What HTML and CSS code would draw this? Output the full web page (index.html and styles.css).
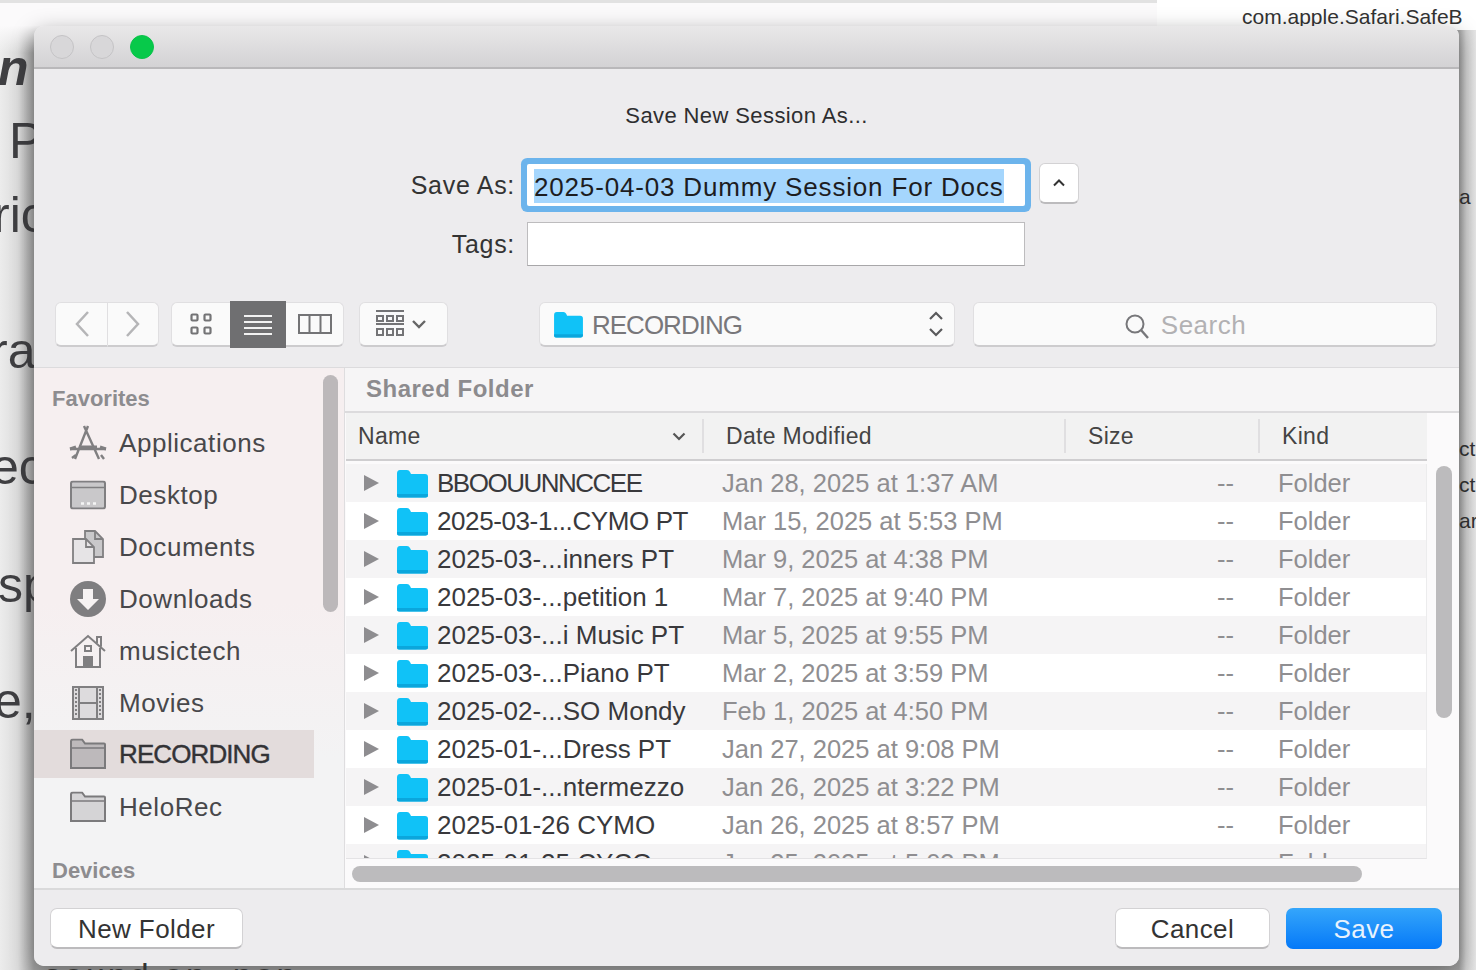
FILE: index.html
```html
<!DOCTYPE html>
<html lang="en">
<head>
  <meta charset="UTF-8">
  <title>Save New Session As</title>
  <link rel="stylesheet" href="styles.css">
</head>
<body>
<svg class="defs" width="0" height="0">
  <symbol id="blue-folder" viewBox="0 0 33 29">
    <path d="M1 4.500Q1 1 4 1h7q2 0 3 2l1 2h14q3 0 3 3v18q0 2.500-2.500 2.500h-27Q1 28.500 1 26z" fill="#10c2f7"/>
    <path d="M1 26q0 2.500 2.500 2.500h26q2.500 0 2.500-2.500v-1H1z" fill="#0ba6dc"/>
  </symbol>
  <symbol id="gray-folder" viewBox="0 0 36 31">
    <path d="M1 29.500V3q0-2 2-2h9l3 4h19q1 0 1 1v23.500z" fill="currentColor" stroke="#7b7a7c" stroke-width="2"/>
    <path d="M1 9.500h34" stroke="#7b7a7c" stroke-width="1.500"/>
  </symbol>
  <symbol id="twisty" viewBox="0 0 16 16"><path d="M1 0l15 8-15 8z" fill="#8e8d90"/></symbol>
</svg>

<div class="backdrop">
  <div class="top-sheet"></div>
  <div class="top-list">com.apple.Safari.SafeB</div>
  <span class="bg-text bg-n">n</span>
  <span class="bg-text bg-p">P</span>
  <span class="bg-text bg-ric">ric</span>
  <span class="bg-text bg-ra">ra</span>
  <span class="bg-text bg-ec">ec</span>
  <span class="bg-text bg-sp">sp</span>
  <span class="bg-text bg-e">e,</span>
  <span class="bg-small bg-a1">a</span>
  <span class="bg-small bg-c1">cti</span>
  <span class="bg-small bg-c2">cti</span>
  <span class="bg-small bg-c3">ar</span>
  <span class="bg-bottom">sound on, non</span>
</div>

<div class="window">
  <div class="titlebar">
    <span class="light"></span>
    <span class="light"></span>
    <span class="light green"></span>
  </div>

  <div class="form">
    <div class="form-title">Save New Session As...</div>
    <div class="form-row save-row">
      <label>Save As:</label>
      <div class="field focused"><span class="selection">2025-04-03 Dummy Session For Docs</span></div>
      <button class="collapse">
        <svg width="14" height="9" viewBox="0 0 14 9"><path d="M2 7.500l5-5 5 5" fill="none" stroke="#333" stroke-width="2"/></svg>
      </button>
    </div>
    <div class="form-row tags-row">
      <label>Tags:</label>
      <div class="field tags"></div>
    </div>
  </div>

  <div class="toolbar">
    <div class="group nav">
      <button class="tool back">
        <svg width="16" height="28" viewBox="0 0 16 28"><path d="M14 2L3 14l11 12" fill="none" stroke="#b5b5b7" stroke-width="2.500"/></svg>
      </button>
      <button class="tool forward">
        <svg width="16" height="28" viewBox="0 0 16 28"><path d="M2 2l11 12L2 26" fill="none" stroke="#b5b5b7" stroke-width="2.500"/></svg>
      </button>
    </div>
    <div class="group views">
      <button class="tool view">
        <svg width="22" height="22" viewBox="0 0 22 22" fill="none" stroke="#747476" stroke-width="2.200"><rect x="1.500" y="1.500" width="6" height="6" rx="1"/><rect x="14.500" y="1.500" width="6" height="6" rx="1"/><rect x="1.500" y="14.500" width="6" height="6" rx="1"/><rect x="14.500" y="14.500" width="6" height="6" rx="1"/></svg>
      </button>
      <button class="tool view active">
        <svg width="30" height="22" viewBox="0 0 30 22" stroke="#f2f2f2" stroke-width="2"><path d="M1 2h28M1 8h28M1 14h28M1 20h28"/></svg>
      </button>
      <button class="tool view">
        <svg width="34" height="22" viewBox="0 0 34 22" fill="none" stroke="#747476" stroke-width="2"><rect x="1" y="2" width="32" height="18"/><path d="M11.500 2v18M22.500 2v18"/></svg>
      </button>
    </div>
    <button class="tool arrange">
      <svg width="30" height="28" viewBox="0 0 30 28" fill="none" stroke="#747476" stroke-width="2"><path d="M1 1h28M1 14h28"/><rect x="2" y="6" width="6" height="5"/><rect x="12" y="6" width="6" height="5"/><rect x="22" y="6" width="6" height="5"/><rect x="2" y="19" width="6" height="6"/><rect x="12" y="19" width="6" height="6"/><rect x="22" y="19" width="6" height="6"/></svg>
      <svg width="16" height="10" viewBox="0 0 16 10"><path d="M2 2l6 6 6-6" fill="none" stroke="#666" stroke-width="2.400"/></svg>
    </button>
    <button class="tool path-popup">
      <svg class="popup-folder" width="33" height="27"><use href="#blue-folder"/></svg>
      <span class="popup-name">RECORDING</span>
      <svg class="updown" width="16" height="28" viewBox="0 0 16 28" fill="none" stroke="#5a5a5c" stroke-width="2.200"><path d="M2 9l6-6 6 6M2 19l6 6 6-6"/></svg>
    </button>
    <div class="tool search">
      <svg width="26" height="26" viewBox="0 0 26 26" fill="none" stroke="#77777a" stroke-width="2"><circle cx="11" cy="11" r="8.500"/><path d="M17 17l7 8" stroke-width="2.400"/></svg>
      <span>Search</span>
    </div>
  </div>

  <div class="browser">
    <aside class="sidebar">
      <div class="side-head">Favorites</div>
      <div class="side-item">
        <svg width="38" height="36" viewBox="0 0 38 36" fill="none" stroke="#807f81" stroke-width="2.400"><path d="M19 1L6 34M15 1l15 33M1 24l36 0" /><path d="M1 24l6-2M37 24l-6-2M10 22h18" stroke-width="3"/><path d="M3 33l4-3M35 34l-3-4"/></svg>
        <span>Applications</span>
      </div>
      <div class="side-item">
        <svg width="36" height="29" viewBox="0 0 36 29"><rect x="1" y="1" width="34" height="27" rx="2" fill="#c9c8ca" stroke="#807f81" stroke-width="2"/><path d="M1 7h34" stroke="#807f81" stroke-width="1.500"/><path d="M11 23h3M17 23h3M23 23h3" stroke="#f5f5f5" stroke-width="2.500"/></svg>
        <span>Desktop</span>
      </div>
      <div class="side-item">
        <svg width="32" height="34" viewBox="0 0 32 34" fill="none" stroke="#807f81" stroke-width="1.800"><path d="M13 8V1h10l8 8v18h-9" fill="#c9c8ca"/><path d="M1 9h13l8 8v16H1z" fill="#e6e4e6"/><path d="M14 9v8h8M23 1v8h8"/></svg>
        <span>Documents</span>
      </div>
      <div class="side-item">
        <svg width="36" height="36" viewBox="0 0 36 36"><circle cx="18" cy="18" r="18" fill="#7f7e80"/><path d="M13 8h10v10h6L18 29 7 18h6z" fill="#f6f2f2"/></svg>
        <span>Downloads</span>
      </div>
      <div class="side-item">
        <svg width="36" height="34" viewBox="0 0 36 34" fill="none" stroke="#807f81" stroke-width="2"><path d="M1 17L18 2l17 15M27 9V3h4v9.500"/><path d="M6 14v19h24V14"/><rect x="15" y="12" width="6" height="5"/><rect x="14" y="23" width="8" height="10" fill="#807f81"/></svg>
        <span>musictech</span>
      </div>
      <div class="side-item">
        <svg width="32" height="34" viewBox="0 0 32 34"><rect x="1" y="1" width="30" height="32" fill="#dddbdd" stroke="#807f81" stroke-width="2"/><path d="M7 1v32M25 1v32M7 17h18" stroke="#807f81" stroke-width="2"/><path d="M4 3v28M28 3v28" stroke="#807f81" stroke-width="2" stroke-dasharray="2 2"/></svg>
        <span>Movies</span>
      </div>
      <div class="side-item selected">
        <svg class="folder-sel" width="36" height="31"><use href="#gray-folder"/></svg>
        <span>RECORDING</span>
      </div>
      <div class="side-item">
        <svg class="folder-plain" width="36" height="31"><use href="#gray-folder"/></svg>
        <span>HeloRec</span>
      </div>
      <div class="side-head devices">Devices</div>
      <div class="side-thumb"></div>
    </aside>

    <section class="files">
      <div class="path-title">Shared Folder</div>
      <div class="list-area">
        <div class="list-head">
          <div class="col-name">Name
            <svg width="14" height="9" viewBox="0 0 14 9"><path d="M1.500 1.500L7 7l5.500-5.500" fill="none" stroke="#555" stroke-width="2.200"/></svg>
          </div>
          <div class="col-date">Date Modified</div>
          <div class="col-size">Size</div>
          <div class="col-kind">Kind</div>
        </div>
        <div class="rows">
          <div class="row"><div class="name"><svg class="twisty" width="16" height="16"><use href="#twisty"/></svg><svg width="33" height="29"><use href="#blue-folder"/></svg><span class="caps">BBOOUUNNCCEE</span></div><div class="date">Jan 28, 2025 at 1:37 AM</div><div class="size">--</div><div class="kind">Folder</div></div>
          <div class="row"><div class="name"><svg class="twisty" width="16" height="16"><use href="#twisty"/></svg><svg width="33" height="29"><use href="#blue-folder"/></svg><span class="snug">2025-03-1...CYMO PT</span></div><div class="date">Mar 15, 2025 at 5:53 PM</div><div class="size">--</div><div class="kind">Folder</div></div>
          <div class="row"><div class="name"><svg class="twisty" width="16" height="16"><use href="#twisty"/></svg><svg width="33" height="29"><use href="#blue-folder"/></svg><span>2025-03-...inners PT</span></div><div class="date">Mar 9, 2025 at 4:38 PM</div><div class="size">--</div><div class="kind">Folder</div></div>
          <div class="row"><div class="name"><svg class="twisty" width="16" height="16"><use href="#twisty"/></svg><svg width="33" height="29"><use href="#blue-folder"/></svg><span>2025-03-...petition 1</span></div><div class="date">Mar 7, 2025 at 9:40 PM</div><div class="size">--</div><div class="kind">Folder</div></div>
          <div class="row"><div class="name"><svg class="twisty" width="16" height="16"><use href="#twisty"/></svg><svg width="33" height="29"><use href="#blue-folder"/></svg><span>2025-03-...i Music PT</span></div><div class="date">Mar 5, 2025 at 9:55 PM</div><div class="size">--</div><div class="kind">Folder</div></div>
          <div class="row"><div class="name"><svg class="twisty" width="16" height="16"><use href="#twisty"/></svg><svg width="33" height="29"><use href="#blue-folder"/></svg><span>2025-03-...Piano PT</span></div><div class="date">Mar 2, 2025 at 3:59 PM</div><div class="size">--</div><div class="kind">Folder</div></div>
          <div class="row"><div class="name"><svg class="twisty" width="16" height="16"><use href="#twisty"/></svg><svg width="33" height="29"><use href="#blue-folder"/></svg><span>2025-02-...SO Mondy</span></div><div class="date">Feb 1, 2025 at 4:50 PM</div><div class="size">--</div><div class="kind">Folder</div></div>
          <div class="row"><div class="name"><svg class="twisty" width="16" height="16"><use href="#twisty"/></svg><svg width="33" height="29"><use href="#blue-folder"/></svg><span>2025-01-...Dress PT</span></div><div class="date">Jan 27, 2025 at 9:08 PM</div><div class="size">--</div><div class="kind">Folder</div></div>
          <div class="row"><div class="name"><svg class="twisty" width="16" height="16"><use href="#twisty"/></svg><svg width="33" height="29"><use href="#blue-folder"/></svg><span>2025-01-...ntermezzo</span></div><div class="date">Jan 26, 2025 at 3:22 PM</div><div class="size">--</div><div class="kind">Folder</div></div>
          <div class="row"><div class="name"><svg class="twisty" width="16" height="16"><use href="#twisty"/></svg><svg width="33" height="29"><use href="#blue-folder"/></svg><span>2025-01-26 CYMO</span></div><div class="date">Jan 26, 2025 at 8:57 PM</div><div class="size">--</div><div class="kind">Folder</div></div>
          <div class="row"><div class="name"><svg class="twisty" width="16" height="16"><use href="#twisty"/></svg><svg width="33" height="29"><use href="#blue-folder"/></svg><span>2025-01-25 CYCO</span></div><div class="date">Jan 25, 2025 at 5:03 PM</div><div class="size">--</div><div class="kind">Folder</div></div>
        </div>
        <div class="v-thumb"></div>
        <div class="h-track"><div class="h-thumb"></div></div>
      </div>
    </section>
  </div>

  <div class="footer">
    <button class="btn">New Folder</button>
    <div class="footer-right">
      <button class="btn cancel">Cancel</button>
      <button class="btn save">Save</button>
    </div>
  </div>
</div>
</body>
</html>
```

FILE: styles.css
```css
* { box-sizing: border-box; }
html, body { margin: 0; height: 100%; }
body { width: 1476px; height: 970px; overflow: hidden; position: relative; background: #e9e8e9; font-family: "Liberation Sans", Arial, sans-serif; color: #3a3a3c; }
button { font-family: inherit; padding: 0; margin: 0; }
.defs { position: absolute; }

/* stuff behind the dialog */
.backdrop { position: absolute; inset: 0; overflow: hidden; background: linear-gradient(90deg, #ececec 0, #dcdcdc 18px, #a3a3a3 34px, #a3a3a3 1459px, #d0d0d0 1466px, #e6e6e6 1476px); }
.top-sheet { position: absolute; left: 0; top: 0; width: 1157px; height: 53px; background: linear-gradient(#fbfafb 45%, rgba(240,240,240,0)); border-top: 3px solid #e2e2e2; }
.top-list { position: absolute; left: 1157px; top: 0; width: 319px; height: 30px; background: #fff; padding: 5px 0 0 85px; font-size: 21px; color: #333; white-space: nowrap; overflow: hidden; }
.bg-text { position: absolute; font-size: 50px; line-height: 56px; color: #3f3f42; }
.bg-small { position: absolute; left: 1459px; font-size: 21px; line-height: 24px; color: #333; white-space: nowrap; }
.bg-n { left: -2px; top: 40px; font-weight: bold; font-style: italic; }
.bg-p { left: 9px; top: 113px; }
.bg-ric { left: -7px; top: 187px; }
.bg-ra { left: -9px; top: 323px; }
.bg-ec { left: -9px; top: 439px; }
.bg-sp { left: -2px; top: 557px; }
.bg-e { left: -6px; top: 673px; }
.bg-a1 { top: 185px; }
.bg-c1 { top: 437px; }
.bg-c2 { top: 473px; }
.bg-c3 { top: 509px; }
.bg-bottom { position: absolute; left: 44px; top: 957px; font-size: 34px; line-height: 36px; letter-spacing: 3px; color: #333; white-space: nowrap; z-index: 1; }

/* dialog */
.window { position: absolute; left: 34px; top: 26px; width: 1425px; height: 940px; display: flex; flex-direction: column; background: #edecee; border-radius: 10px; overflow: hidden; }
.backdrop::after { content: ""; position: absolute; left: 34px; top: 26px; width: 1425px; height: 940px; border-radius: 10px; box-shadow: 0 6px 22px rgba(0,0,0,.35); }

.titlebar { height: 43px; flex: none; display: flex; align-items: center; gap: 16px; padding: 0 0 0 16px; background: linear-gradient(#e9e8e9, #d3d2d4); border-bottom: 2px solid #b9b8ba; }
.light { width: 24px; height: 24px; border-radius: 50%; background: #d8d7d9; border: 1px solid #c4c3c5; }
.light.green { background: #07c94a; border-color: #0ac24a; }

.form { height: 233px; flex: none; padding-top: 35px; }
.form-title { text-align: center; font-size: 22px; line-height: 24px; color: #2e2e30; letter-spacing: .4px; }
.form-row { display: flex; align-items: center; }
.form-row label { width: 481px; margin-right: 12px; text-align: right; font-size: 25px; color: #333; flex: none; letter-spacing: .7px; }
.save-row { margin-top: 37px; height: 40px; }
.tags-row { margin-top: 17px; height: 44px; }
.field { width: 498px; background: #fff; }
.field.focused { height: 42px; flex: none; box-shadow: 0 0 0 6px #6cb4ec; border-radius: 2px; padding: 5px 0 0 7px; }
.field.tags { height: 44px; border: 1px solid #bdbcbe; border-bottom-color: #a8a7a9; }
.selection { display: inline-block; height: 34px; line-height: 36px; background: #a5d6fd; font-size: 26px; color: #1d1d1f; white-space: nowrap; letter-spacing: .83px; }
.collapse { width: 40px; height: 41px; margin-left: 14px; margin-top: -4px; background: #fff; border: 1px solid #d3d2d4; border-bottom: 2px solid #bcbbbd; border-radius: 6px; display: flex; align-items: center; justify-content: center; }

.toolbar { height: 65px; flex: none; display: flex; padding: 0 22px 20px 21px; align-items: stretch; }
.group { display: flex; }
.tool { background: #fafafa; border: 1px solid #e0dfe1; border-bottom: 2px solid #cdccce; border-radius: 6px; display: flex; align-items: center; justify-content: center; }
.nav { width: 104px; }
.back { width: 53px; border-radius: 6px 0 0 6px; }
.forward { width: 51px; border-radius: 0 6px 6px 0; border-left: 0; }
.views { margin-left: 12px; width: 173px; }
.view { flex: none; width: 59px; border-radius: 6px 0 0 6px; border-right: 0; }
.view.active { width: 56px; margin: -1px 0 -1px; background: #6f6f71; border: 0; border-radius: 0; }
.view:last-child { width: 58px; border-radius: 0 6px 6px 0; border-right: 1px solid #e0dfe1; border-left: 0; }
.arrange { margin-left: 15px; width: 89px; gap: 6px; padding-right: 6px; }
.path-popup { margin-left: 91px; width: 416px; justify-content: flex-start; padding: 0 10px 0 12px; }
.popup-name { margin-left: 7px; padding-top: 3px; font-size: 26px; color: #78777a; letter-spacing: -1px; }
.updown { margin-left: auto; }
.search { margin-left: 18px; flex: 1; gap: 11px; padding: 3px 40px 0 0; font-size: 26px; color: #b2b1b3; letter-spacing: .5px; }

.browser { flex: 1; min-height: 0; display: flex; border-top: 1px solid #dcdbdd; border-bottom: 2px solid #dadadb; }
.sidebar { width: 311px; flex: none; position: relative; overflow: hidden; background: linear-gradient(#f6eff0, #f6eff0 45%, #f3f3f4 75%); border-right: 1px solid #dedddf; padding-top: 18px; }
.side-head { padding-left: 18px; font-size: 22px; line-height: 26px; font-weight: bold; color: #8d8c8f; }
.side-head.devices { margin-top: 25px; }
.side-item { height: 52px; display: flex; align-items: center; font-size: 26px; color: #48484b; letter-spacing: .55px; position: relative; }
.side-item:nth-child(2) { margin-top: 5px; }
.side-item svg { position: absolute; left: 54px; top: 50%; transform: translate(-50%, -50%); }
.side-item span { margin-left: 85px; }
.side-item.selected { width: 280px; height: 48px; margin: 1px 0 3px; background: #e3dcdc; color: #333336; letter-spacing: -.9px; -webkit-text-stroke: .4px #333336; }
.folder-sel { color: #bdb9bb; }
.folder-plain { color: #d5d4d6; }
.side-thumb { position: absolute; left: 289px; top: 7px; width: 15px; height: 237px; border-radius: 8px; background: #bcb8ba; }

.files { flex: 1; min-width: 0; display: flex; flex-direction: column; background: #fbfafb; }
.path-title { height: 45px; flex: none; padding: 7px 0 0 21px; font-size: 24px; font-weight: bold; color: #8c8b8e; letter-spacing: .5px; background: #f6f5f6; border-bottom: 2px solid #dcdbdd; }
.list-area { flex: 1; min-height: 0; position: relative; display: flex; flex-direction: column; }
.list-head { width: 1081px; height: 48px; flex: none; margin-left: 1px; display: grid; grid-template-columns: 356px 362px 194px 169px; align-items: center; font-size: 23px; color: #444; letter-spacing: .3px; background: #f2f2f2; border-bottom: 2px solid #cfced0; }
.list-head > div { height: 34px; line-height: 34px; border-left: 2px solid #e0dfe1; padding-left: 22px; }
.list-head .col-name { border-left: 0; padding: 0 16px 0 12px; display: flex; justify-content: space-between; align-items: center; }
.rows { width: 1081px; height: 395px; margin: 3px 0 0 1px; overflow: hidden; border-bottom: 1px solid #e4e3e5; border-right: 1px solid #ececed; flex: none; }
.row { height: 38px; display: grid; grid-template-columns: 356px 362px 194px 169px; align-items: center; font-size: 25.500px; white-space: nowrap; }
.row:nth-child(odd) { background: #f5f4f5; }
.row:nth-child(even) { background: #fff; }
.name { display: flex; align-items: center; padding-left: 17px; font-size: 26px; color: #39393c; }
.name svg { flex: none; }
.twisty { margin-right: 17px; }
.name span { margin-left: 8px; }
.name .caps { letter-spacing: -1.500px; }
.name .snug { letter-spacing: -.4px; }
.date, .kind { padding-left: 20px; color: #8f8e91; }
.size { text-align: right; padding-right: 24px; color: #8f8e91; }
.v-thumb { position: absolute; left: 1091px; top: 53px; width: 16px; height: 252px; border-radius: 8px; background: #bcbbbd; }
.h-track { flex: 1; position: relative; }
.h-thumb { position: absolute; left: 7px; top: 7px; width: 1010px; height: 16px; border-radius: 8px; background: #bcbbbd; }

.footer { height: 76px; flex: none; display: flex; justify-content: space-between; padding: 18px 17px 0 16px; background: #edecee; }
.footer-right { display: flex; gap: 16px; }
.btn { height: 41px; width: 193px; padding-top: 2px; background: #fff; border: 1px solid #d3d2d4; border-bottom: 2px solid #bcbbbd; border-radius: 7px; font-size: 26px; color: #333; letter-spacing: .4px; }
.cancel { width: 155px; }
.save { width: 156px; background: linear-gradient(#35a6fb, #0579f8); border: 0; color: #e8f2fd; }
```
